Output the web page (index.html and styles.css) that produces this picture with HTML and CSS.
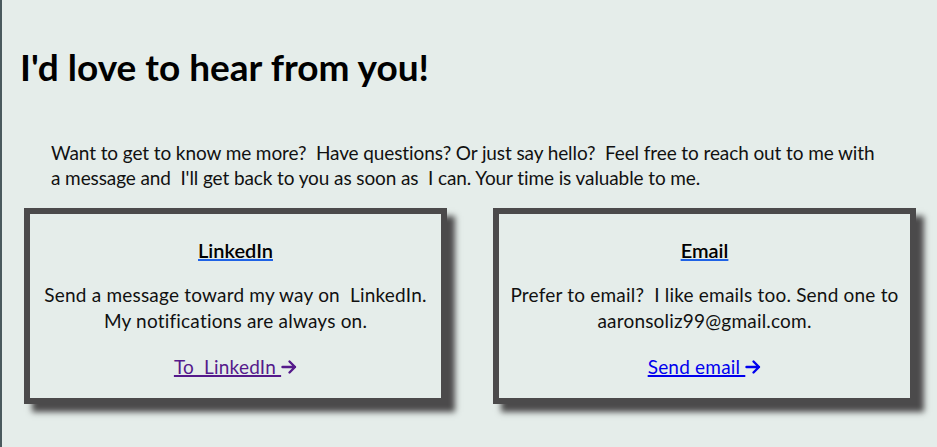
FILE: index.html
```html
<!DOCTYPE html>
<html lang="en">
<head>
<meta charset="utf-8">
<title>Contact</title>
<link rel="stylesheet" href="styles.css">
</head>
<body>
<main class="page">
  <h1 class="title">I'd love to hear from you!</h1>
  <p class="intro">Want to get to know me more?&nbsp; Have questions? Or just say hello?&nbsp; Feel free to reach out to me with a message and&nbsp; I'll get back to you as soon as&nbsp; I can. Your time is valuable to me.</p>
  <section class="cards">
    <div class="card">
      <a class="card-head" href="#linkedin"><h3 class="card-title">LinkedIn</h3></a>
      <p class="card-text">Send a message toward my way on&nbsp; LinkedIn. My notifications are always on.</p>
      <p class="card-action"><a class="card-link visited" href="#linkedin">To&nbsp; LinkedIn <svg class="arrow" viewBox="0 0 16 16" aria-hidden="true"><path d="M1.5 8H14M8.5 2.5L14 8L8.5 13.5"/></svg></a></p>
    </div>
    <div class="card">
      <a class="card-head" href="#email"><h3 class="card-title">Email</h3></a>
      <p class="card-text">Prefer to email?&nbsp; I like emails too. Send one to aaronsoliz99@gmail.com.</p>
      <p class="card-action"><a class="card-link" href="#email">Send email <svg class="arrow" viewBox="0 0 16 16" aria-hidden="true"><path d="M1.5 8H14M8.5 2.5L14 8L8.5 13.5"/></svg></a></p>
    </div>
  </section>
</main>
</body>
</html>
```
FILE: styles.css
```css
html, body {
  margin: 0;
  padding: 0;
}
body {
  background: #e5edea;
  font-family: Lato, "Open Sans", sans-serif;
  color: #111;
  height: 447px;
  overflow: hidden;
}
.page {
  border-left: 2px solid #4a5a5e;
  min-height: 447px;
  box-sizing: border-box;
  padding-top: 44px;
}
.title {
  margin: 0 0 0 18px;
  font-size: 37px;
  line-height: 46px;
  font-weight: 700;
  color: #000;
}
.intro {
  margin: 50px 50px 0 49px;
  font-size: 19px;
  letter-spacing: -0.1px;
  line-height: 25px;
  color: #111;
}
.cards {
  display: flex;
  gap: 46px;
  padding: 0 21px 0 22px;
  margin-top: 18px;
}
.card {
  flex: 1;
  border: 6px solid #4b4a4b;
  box-shadow: 8px 8px 6px #4b4a4b;
  text-align: center;
  padding: 23px 6px 19px;
  font-size: 19px;
  letter-spacing: 0.2px;
  line-height: 26px;
  box-sizing: border-box;
  height: 196px;
}
.card-head {
  color: #1e62e6;
  text-decoration: underline;
  text-decoration-color: #1e62e6;
  text-decoration-thickness: 2px;
  display: inline-block;
}
.card-title {
  margin: 0;
  font-size: 20px;
  line-height: 26px;
  font-weight: 600;
  color: #000;
  letter-spacing: 0;
}
.card-text {
  margin: 18px 0 0;
  color: #111;
}
.card-action {
  margin: 20px 0 0;
}
.card-link {
  color: #0000ee;
  text-decoration-thickness: 2px;
}
.card-link.visited {
  color: #551a8b;
}
.arrow {
  width: 16px;
  height: 16px;
  vertical-align: -1px;
  fill: none;
  stroke: currentColor;
  stroke-width: 2.4;
  stroke-linecap: round;
  stroke-linejoin: round;
}
```
